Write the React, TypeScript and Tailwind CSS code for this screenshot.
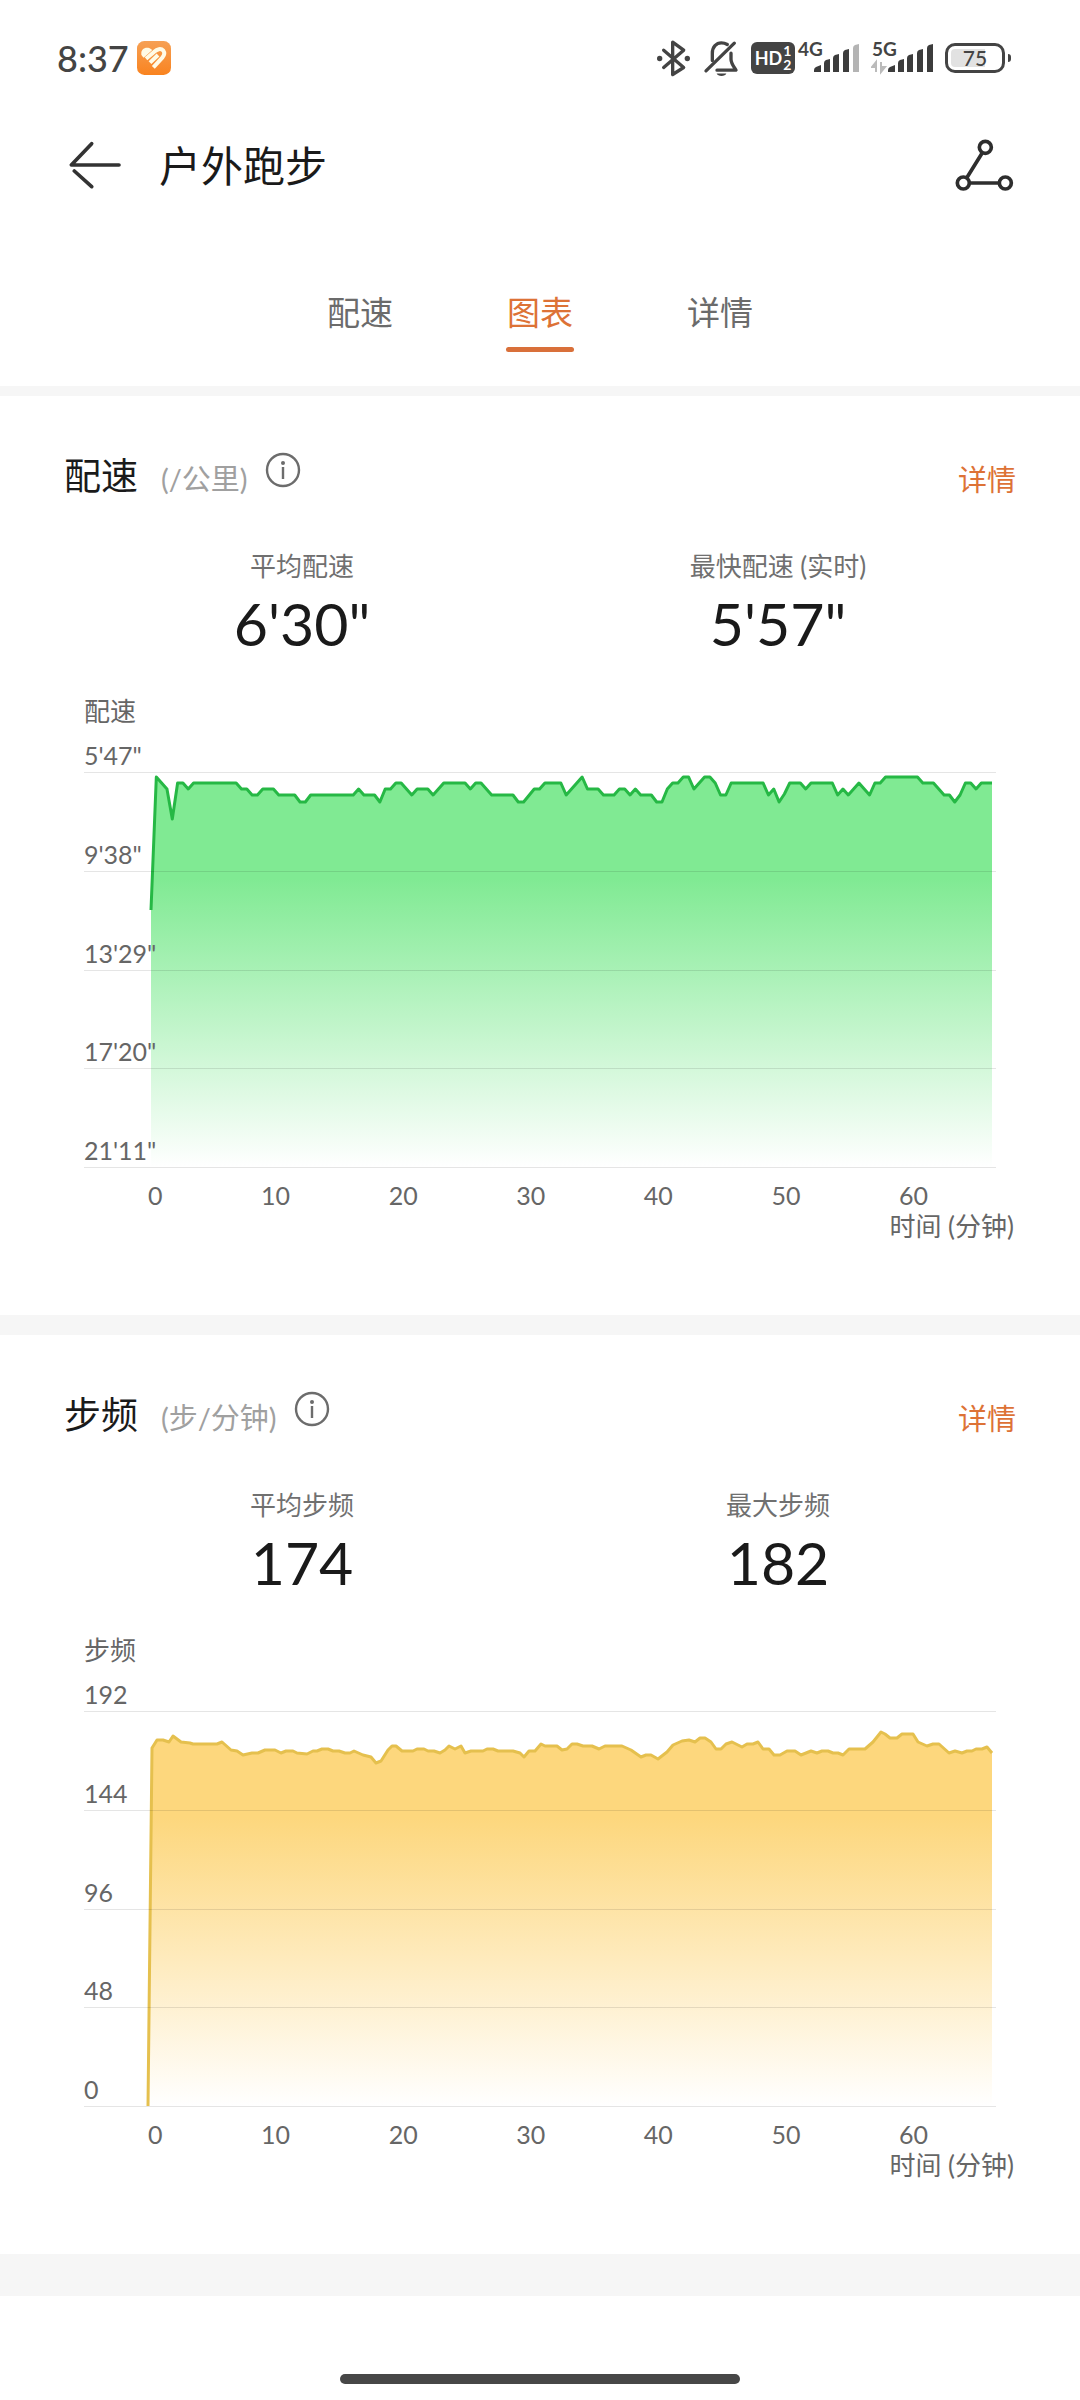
import { useState } from 'react';

type Point = [number, number];

interface ChartSectionProps {
  id: string;
  title: string;
  unit: string;
  stats: { label: string; value: string }[];
  yLabels: string[];
  points: Point[];
  stroke: string;
  fill: string;
}

const TABS = ['配速', '图表', '详情'];
const MINUTES = ['0', '10', '20', '30', '40', '50', '60'];

// [sample index, depth below the top grid line]
const PACE_SAMPLES: Point[] = [
  [0, 138], [1, 5], [2, 11], [3, 17], [4, 47], [5, 11], [6, 11], [7, 17], [8, 11], [16, 11],
  [17, 17], [18, 17], [19, 23], [20, 23], [21, 17], [23, 17], [24, 23], [27, 23], [28, 30], [29, 30],
  [30, 23], [38, 23], [39, 17], [40, 23], [42, 23], [43, 30], [44, 17], [45, 17], [46, 11], [47, 11],
  [49, 23], [50, 17], [52, 17], [53, 23], [55, 11], [59, 11], [60, 17], [61, 11], [62, 11], [64, 23],
  [68, 23], [69, 30], [70, 30], [72, 17], [73, 17], [74, 11], [77, 11], [78, 23], [81, 5], [82, 17],
  [84, 17], [85, 23], [87, 23], [88, 17], [89, 17], [90, 23], [91, 17], [92, 23], [94, 23], [95, 30],
  [96, 30], [97, 17], [98, 11], [99, 11], [100, 5], [101, 5], [102, 17], [104, 5], [105, 5], [106, 11],
  [107, 23], [108, 23], [109, 11], [115, 11], [116, 23], [117, 17], [118, 30], [119, 22], [120, 11], [122, 11],
  [123, 17], [124, 11], [128, 11], [129, 23], [130, 17], [131, 23], [133, 11], [135, 23], [136, 11], [137, 11],
  [138, 5], [144, 5], [145, 11], [147, 11], [149, 23], [150, 23], [151, 30], [152, 23], [153, 11], [154, 11],
  [155, 17], [156, 11], [158, 11],
];
const PACE: Point[] = PACE_SAMPLES.map(([i, y]) => [67 + (i * 841) / 158, y]);

const CADENCE: Point[] = [
  [64, 395], [68, 37], [73, 29], [79, 29], [85, 31], [89, 25], [97, 31], [106, 32], [109, 33], [133, 33],
  [138, 31], [147, 39], [153, 40], [159, 44], [168, 42], [174, 42], [181, 39], [191, 39], [197, 42], [202, 40],
  [209, 40], [213, 42], [223, 43], [229, 40], [233, 40], [238, 38], [244, 38], [249, 40], [255, 40], [261, 42],
  [266, 42], [270, 40], [279, 44], [287, 46], [292, 52], [297, 50], [304, 39], [308, 35], [312, 35], [318, 40],
  [329, 40], [333, 38], [340, 38], [344, 40], [350, 40], [356, 42], [361, 39], [365, 35], [371, 38], [377, 35],
  [381, 42], [387, 40], [399, 40], [403, 38], [409, 38], [414, 40], [429, 40], [436, 42], [440, 46], [445, 40],
  [451, 40], [457, 33], [461, 35], [473, 35], [478, 39], [483, 38], [488, 33], [493, 33], [499, 35], [508, 35],
  [515, 38], [521, 35], [538, 35], [547, 39], [557, 46], [562, 44], [567, 44], [574, 48], [583, 41], [589, 34],
  [598, 30], [605, 29], [611, 31], [616, 27], [621, 27], [627, 31], [632, 38], [637, 38], [642, 33], [648, 31],
  [658, 36], [663, 33], [669, 33], [674, 31], [679, 38], [685, 38], [690, 44], [696, 44], [703, 40], [711, 40],
  [717, 44], [727, 40], [733, 42], [738, 40], [744, 40], [749, 42], [754, 42], [759, 44], [765, 38], [781, 38],
  [789, 31], [797, 21], [801, 23], [806, 27], [813, 27], [818, 23], [829, 23], [834, 31], [843, 35], [849, 33],
  [855, 33], [865, 42], [871, 40], [878, 42], [883, 40], [888, 40], [892, 38], [898, 38], [903, 36], [908, 42],
];

function AppBadge() {
  return (
    <svg className="w-[34px] h-[34px]" viewBox="0 0 102 102" fill="none">
      <defs>
        <linearGradient id="badge" x1="0" y1="0" x2="0" y2="1">
          <stop offset="0" stopColor="#f6a054" />
          <stop offset="1" stopColor="#f9831f" />
        </linearGradient>
      </defs>
      <rect width="102" height="102" rx="22" fill="url(#badge)" />
      <path d="M13 40C11 26 24 17 38 22L46 27L20 50C16 47 14 44 13 40Z" fill="#fffbe6" />
      <path
        d="M27 53L52 32C60 24 72 21 79 29C84 36 82 43 76 50L49 79M39 65L63 42"
        stroke="#fffbe6"
        strokeWidth="12"
        strokeLinejoin="round"
      />
    </svg>
  );
}

function BluetoothIcon() {
  return (
    <svg className="w-9 h-[39px]" viewBox="0 0 108 116" fill="none" stroke="#444" strokeWidth="10" strokeLinejoin="round" strokeLinecap="round">
      <path d="M26 33L86 85L53 106V9L86 33L26 85" />
      <circle cx="14" cy="58" r="8" fill="#444" stroke="none" />
      <circle cx="97" cy="58" r="8" fill="#444" stroke="none" />
    </svg>
  );
}

function MutedBellIcon() {
  return (
    <svg className="w-9 h-[39px]" viewBox="0 0 108 116" fill="none" stroke="#444" strokeWidth="10" strokeLinejoin="round" strokeLinecap="round">
      <path d="M9 95L94 12" />
      <path d="M28 64V42C28 23 40 11 55 11C62 11 68 13 73 16" />
      <path d="M84 42V60C84 72 92 82 99 93H42" />
      <path d="M41 103H70C68 113 43 113 41 103Z" fill="#444" stroke="none" />
    </svg>
  );
}

function SignalIcon({ network, bars, transfer }: { network: string; bars: number; transfer?: boolean }) {
  const shapes = [
    'M17 33V31Q17 29 19 28L24 26V33Z',
    'M27 33V24Q27 22 29 21L33 20V33Z',
    'M36 33V19Q36 17 38 16L42 15V33Z',
    'M46 33V14Q46 12 48 11L52 10V33Z',
    'M56 33V9Q56 7 58 6L62 5V33Z',
  ];
  return (
    <svg className="w-[62px] h-[51px]" viewBox="0 -6 62 51">
      <text x="1" y="17" fill="#444" className="font-[Lato] text-[19px] font-bold">{network}</text>
      {transfer && (
        <path d="M5 33V23L1 28H5M10 23V33L14 28H10" fill="#bbb" stroke="#bbb" strokeWidth="2" />
      )}
      {shapes.map((d, i) => (
        <path key={d} d={d} fill={i < bars ? '#3c3c3c' : '#b4b4b4'} />
      ))}
    </svg>
  );
}

function Battery() {
  return (
    <div className="flex items-center gap-[3px]">
      <div className="w-[60px] h-[30px] rounded-[10px] border-3 border-[#444] p-[3px]">
        <div className="h-full w-full rounded-sm bg-linear-to-r from-[#e2e2e2] from-70% to-white to-70% flex items-center justify-center text-[21px] leading-[20px] font-medium">
          75
        </div>
      </div>
      <div className="w-[3px] h-2 rounded-r-sm bg-[#444]" />
    </div>
  );
}

function StatusBar() {
  return (
    <div className="h-[116px] pl-[57px] pr-[69px] flex items-center justify-between text-[#444]">
      <div className="flex items-center gap-2">
        <span className="text-[36px] leading-[48px] font-medium">8:37</span>
        <AppBadge />
      </div>
      <div className="flex items-center gap-3">
        <BluetoothIcon />
        <MutedBellIcon />
        <div className="flex items-center gap-0.5">
          <div className="w-[44px] h-8 rounded-md bg-[#444] text-white font-bold flex items-center justify-center gap-px">
            <span className="text-[18px] leading-[20px]">HD</span>
            <span className="flex flex-col text-[14px] leading-[14px]">
              <span>1</span>
              <span>2</span>
            </span>
          </div>
          <SignalIcon network="4G" bars={4} />
        </div>
        <SignalIcon network="5G" bars={5} transfer />
        <Battery />
      </div>
    </div>
  );
}

function InfoIcon() {
  return (
    <svg className="w-9 h-9" viewBox="0 0 36 36" fill="none" stroke="#6c6c6c" strokeWidth="2.4">
      <circle cx="18" cy="18" r="16" />
      <path d="M18 15V27" />
      <circle cx="18" cy="11" r="2" fill="#6c6c6c" stroke="none" />
    </svg>
  );
}

function ChartSection({ id, title, unit, stats, yLabels, points, stroke, fill }: ChartSectionProps) {
  const line = points.map(([x, y]) => `${x},${y}`).join(' L');
  const area = `M${points[0][0]},395 L${line} L${points[points.length - 1][0]},395 Z`;

  return (
    <section className="pt-[52px] pb-[75px]">
      <div className="px-16 h-14 flex items-center justify-between">
        <div className="flex items-center">
          <h2 className="text-[37px] leading-[56px] text-[#1a1a1a]">{title}</h2>
          <span className="ml-[23px] mt-1.5 text-[29px] leading-[48px] text-[#a0a0a0]">{unit}</span>
          <button aria-label={`${title}说明`} className="ml-[17px] mb-3">
            <InfoIcon />
          </button>
        </div>
        <a href={`#${id}`} className="mt-2 text-[29px] leading-[48px] text-[#dd7236]">详情</a>
      </div>

      <div className="px-16 mt-11 grid grid-cols-2 text-center">
        {stats.map((stat) => (
          <div key={stat.label}>
            <div className="text-[26px] leading-[36px] text-[#707070]">{stat.label}</div>
            <div className="mt-1 text-[59px] leading-[72px] text-[#1a1a1a]">{stat.value}</div>
          </div>
        ))}
      </div>

      <div className="mt-[33px] px-[84px] text-[25px] text-[#666]">
        <div className="text-[26px] leading-[36px]">{title}</div>
        <div className="h-11 flex items-end leading-[34px] border-b border-black/10">{yLabels[0]}</div>
        <div className="relative h-[395px]">
          <svg className="absolute inset-0 w-full h-full" viewBox="0 1 912 395" preserveAspectRatio="none" fill="none">
            <defs>
              <linearGradient id={`${id}-fill`} gradientUnits="userSpaceOnUse" x1="0" y1="0" x2="0" y2="395">
                <stop offset="0.27" stopColor={fill} />
                <stop offset="1" stopColor={fill} stopOpacity="0" />
              </linearGradient>
            </defs>
            <path d={area} fill={`url(#${id}-fill)`} />
            <path d={`M${line}`} stroke={stroke} strokeWidth="3" strokeLinejoin="round" vectorEffect="non-scaling-stroke" />
          </svg>
          <div className="relative h-full flex flex-col">
            {yLabels.slice(1).map((label) => (
              <div key={label} className="flex-1 flex items-end leading-[34px] border-b border-black/10">
                {label}
              </div>
            ))}
          </div>
        </div>
      </div>
      <div className="mt-2.5 pl-[148px] pr-[152px] flex justify-between text-[25px] leading-[34px] text-[#666]">
        {MINUTES.map((m) => (
          <span key={m}>{m}</span>
        ))}
      </div>
      <div className="px-[66px] text-right text-[26px] leading-[28px] text-[#666]">时间 (分钟)</div>
    </section>
  );
}

export default function App() {
  const [tab, setTab] = useState('图表');

  return (
    <div className="min-h-screen bg-white font-[Lato,'Noto_Sans_CJK_SC',sans-serif]">
      <StatusBar />

      <header className="h-[98px] pl-[69px] pr-[66px] flex items-center justify-between">
        <div className="flex items-center gap-[38px]">
          <button aria-label="返回">
            <svg className="w-[52px] h-12" viewBox="0 0 156 144" fill="none" stroke="#333" strokeWidth="11" strokeLinecap="round" strokeLinejoin="round">
              <path d="M150 72H7L68 8" />
              <path d="M16 90L68 137" />
            </svg>
          </button>
          <h1 className="pt-0.5 text-[42px] leading-[60px] text-[#1a1a1a]">户外跑步</h1>
        </div>
        <button aria-label="分享">
          <svg className="w-[59px] h-[52px]" viewBox="0 0 177 156" fill="none" stroke="#2e2e2e" strokeWidth="11">
            <circle cx="91" cy="25" r="18" />
            <circle cx="25" cy="132" r="18" />
            <circle cx="151" cy="132" r="18" />
            <path d="M82 41L35 117M43 132H133" />
          </svg>
        </button>
      </header>

      <nav className="pt-[74px] pb-[34px] flex justify-center">
        {TABS.map((name) => (
          <button
            key={name}
            onClick={() => setTab(name)}
            className={`w-[180px] flex flex-col items-center text-[33px] leading-[48px] ${tab === name ? 'text-[#dd7236]' : 'text-[#6b6b6b]'}`}
          >
            {name}
            <span className={`mt-[11px] w-[68px] h-[5px] rounded-full ${tab === name ? 'bg-[#d9703a]' : 'bg-transparent'}`} />
          </button>
        ))}
      </nav>

      <main>
        <div className="h-[10px] bg-[#f6f6f6]" />
        <ChartSection
          id="pace"
          title="配速"
          unit="(/公里)"
          stats={[
            { label: '平均配速', value: '6\'30"' },
            { label: '最快配速 (实时)', value: '5\'57"' },
          ]}
          yLabels={['5\'47"', '9\'38"', '13\'29"', '17\'20"', '21\'11"']}
          points={PACE}
          stroke="#26b845"
          fill="#80ea93"
        />
        <div className="h-5 bg-[#f6f6f6]" />
        <ChartSection
          id="cadence"
          title="步频"
          unit="(步/分钟)"
          stats={[
            { label: '平均步频', value: '174' },
            { label: '最大步频', value: '182' },
          ]}
          yLabels={['192', '144', '96', '48', '0']}
          points={CADENCE}
          stroke="#e5c04e"
          fill="#fdd77d"
        />
        <div className="h-[42px] bg-[#f6f6f6]" />
      </main>

      <div className="mt-[78px] pb-4">
        <div className="mx-auto w-[37%] h-[10px] rounded-full bg-[#474747]" />
      </div>
    </div>
  );
}
